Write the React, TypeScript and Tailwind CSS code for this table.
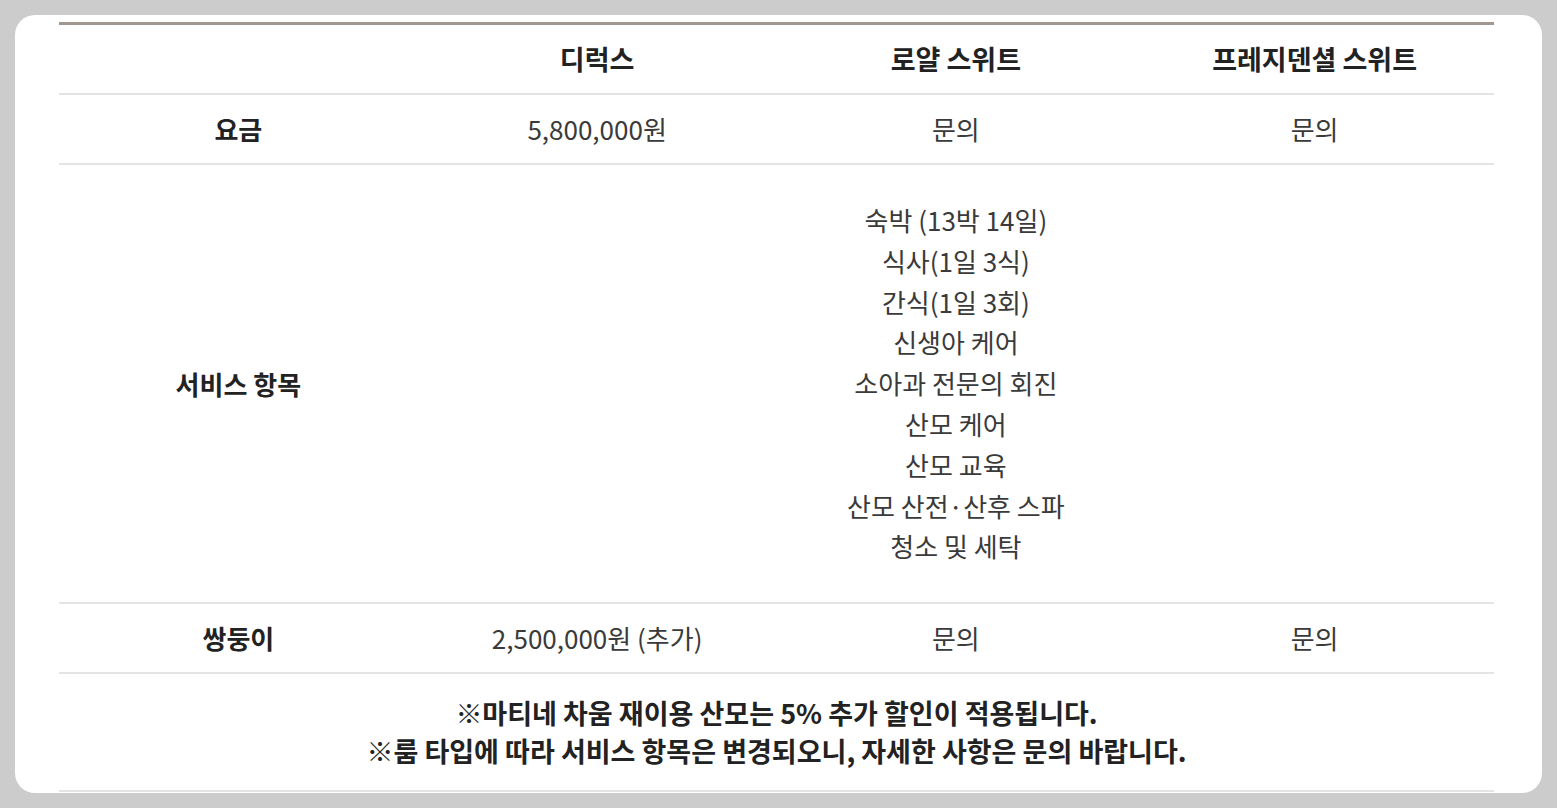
import React from 'react';

const font = { fontFamily: '"Noto Sans CJK KR", "Noto Sans", sans-serif' };

const services = [
  '숙박 (13박 14일)',
  '식사(1일 3식)',
  '간식(1일 3회)',
  '신생아 케어',
  '소아과 전문의 회진',
  '산모 케어',
  '산모 교육',
  '산모 산전·산후 스파',
  '청소 및 세탁',
];

const Row = ({ cells, className = '' }: { cells: React.ReactNode[]; className?: string }) => (
  <div className={`grid grid-cols-4 border-b-2 border-[#e4e4e4] items-center ${className}`}>
    {cells.map((c, i) => (
      <div key={i} className={`text-center ${i === 0 ? 'font-bold text-[#222]' : 'text-[#3a3a3a]'}`}>
        {c}
      </div>
    ))}
  </div>
);

export default function App() {
  return (
    <div className="bg-[#cccccc] w-full h-[808px] p-[15px]" style={font}>
      <div className="bg-white rounded-[20px] h-[778px] overflow-hidden pt-[7px] pl-[44px] pr-[48px]">
        <div className="border-t-[3px] border-[#a0978e] text-[26px] leading-[40px]">
          <div className="grid grid-cols-4 border-b-2 border-[#e4e4e4] py-[14px] font-bold text-[#222] text-[27px]">
            <div />
            <div className="text-center">디럭스</div>
            <div className="text-center">로얄 스위트</div>
            <div className="text-center">프레지덴셜 스위트</div>
          </div>
          <Row className="py-[14px]" cells={['요금', '5,800,000원', '문의', '문의']} />
          <Row
            className="py-[35px]"
            cells={[
              '서비스 항목',
              '',
              <div className="leading-[40.8px]">
                {services.map((s) => (
                  <div key={s}>{s}</div>
                ))}
              </div>,
              '',
            ]}
          />
          <Row className="py-[14px]" cells={['쌍둥이', '2,500,000원 (추가)', '문의', '문의']} />
          <div className="border-b-2 border-[#e4e4e4] py-[20px] text-center font-bold text-[#222] text-[27px] leading-[38px]">
            <div>※마티네 차움 재이용 산모는 5% 추가 할인이 적용됩니다.</div>
            <div>※룸 타입에 따라 서비스 항목은 변경되오니, 자세한 사항은 문의 바랍니다.</div>
          </div>
        </div>
      </div>
    </div>
  );
}
